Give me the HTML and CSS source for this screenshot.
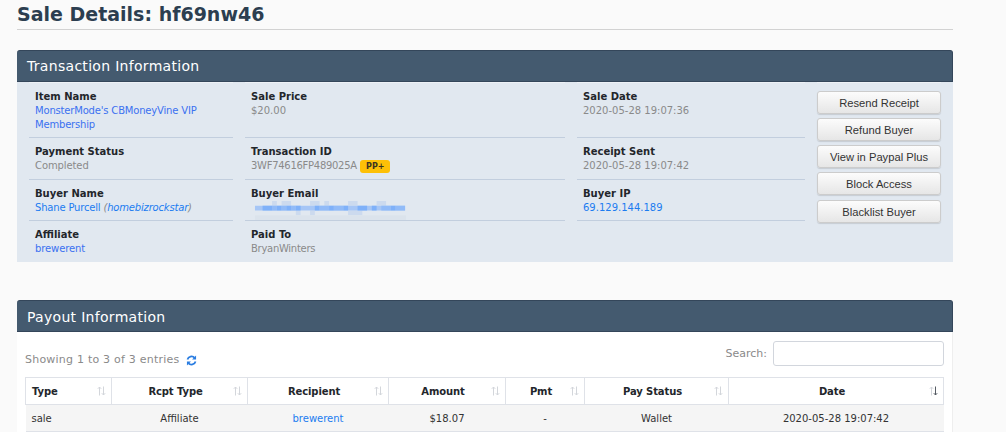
FILE: index.html
```html
<!DOCTYPE html>
<html lang="en">
<head>
<meta charset="utf-8">
<title>Sale Details</title>
<link rel="stylesheet" href="styles.css">
</head>
<body>
<main class="page">
  <h1 class="title">Sale Details: hf69nw46</h1>

  <section class="panel panel-info">
    <h2 class="panel-head">Transaction Information</h2>
    <div class="info-grid">
      <div class="cell"><b>Item Name</b><a class="link-soft tight-2">MonsterMode's CBMoneyVine VIP Membership</a></div>
      <div class="cell"><b>Sale Price</b><span>$20.00</span></div>
      <div class="cell"><b>Sale Date</b><span>2020-05-28 19:07:36</span></div>
      <div class="actions">
        <button>Resend Receipt</button>
        <button>Refund Buyer</button>
        <button>View in Paypal Plus</button>
        <button>Block Access</button>
        <button>Blacklist Buyer</button>
      </div>
      <div class="cell"><b>Payment Status</b><span class="tight-1">Completed</span></div>
      <div class="cell"><b>Transaction ID</b><span><span class="tight-3">3WF74616FP489025A</span> <em class="badge">PP+</em></span></div>
      <div class="cell"><b>Receipt Sent</b><span>2020-05-28 19:07:42</span></div>
      <div class="cell"><b>Buyer Name</b><span class="tight-2"><a>Shane Purcell</a> <i>(<a>homebizrockstar</a>)</i></span></div>
      <div class="cell"><b>Buyer Email</b>
        <svg class="blur" width="159" height="20" viewBox="0 0 159 20" aria-hidden="true">
          <g fill="#ccdaee">
            <rect x="18" y="0" width="5" height="5"/>
            <rect x="28" y="0" width="10" height="5"/>
            <rect x="58" y="0" width="10" height="5"/>
            <rect x="73" y="0" width="5" height="5"/>
            <rect x="98" y="0" width="10" height="5"/>
            <rect x="128" y="0" width="10" height="5"/>
            <rect x="43" y="10" width="5" height="5"/>
            <rect x="58" y="10" width="5" height="5"/>
            <rect x="98" y="10" width="15" height="5"/>
          </g>
          <rect x="0" y="15" width="159" height="5" fill="#dbe3ec"/>
          <rect x="0" y="5" width="158" height="5" fill="#a6c6f6"/>
          <g fill="#7fb1f9">
            <rect x="8" y="5" width="10" height="5"/>
            <rect x="23" y="5" width="5" height="5"/>
            <rect x="33" y="5" width="5" height="5"/>
            <rect x="43" y="5" width="5" height="5"/>
            <rect x="63" y="5" width="5" height="5"/>
            <rect x="78" y="5" width="5" height="5"/>
            <rect x="93" y="5" width="5" height="5"/>
            <rect x="108" y="5" width="10" height="5"/>
            <rect x="123" y="5" width="5" height="5"/>
            <rect x="143" y="5" width="5" height="5"/>
          </g>
          <g fill="#91bbf8">
            <rect x="18" y="5" width="5" height="5"/>
            <rect x="28" y="5" width="5" height="5"/>
            <rect x="38" y="5" width="5" height="5"/>
            <rect x="68" y="5" width="10" height="5"/>
            <rect x="83" y="5" width="10" height="5"/>
            <rect x="133" y="5" width="10" height="5"/>
            <rect x="148" y="5" width="10" height="5"/>
          </g>
        </svg>
      </div>
      <div class="cell"><b>Buyer IP</b><a>69.129.144.189</a></div>
      <div class="cell cell-last"><b>Affiliate</b><a class="link-soft tight-1">brewerent</a></div>
      <div class="cell cell-last"><b>Paid To</b><span class="tight-3">BryanWinters</span></div>
    </div>
  </section>

  <section class="panel panel-payout">
    <h2 class="panel-head">Payout Information</h2>
    <div class="payout-body">
      <div class="toolbar">
        <div class="entries">
          <span>Showing 1 to 3 of 3 entries</span>
          <svg class="refresh" width="11" height="11" viewBox="0 0 12 12" aria-hidden="true">
            <path d="M1.6 5A4.5 4.5 0 0 1 9.4 3.2" fill="none" stroke="#2a7de1" stroke-width="1.9"/>
            <path d="M11 .6V5H6.6z" fill="#2a7de1"/>
            <path d="M10.4 7A4.5 4.5 0 0 1 2.6 8.8" fill="none" stroke="#2a7de1" stroke-width="1.9"/>
            <path d="M1 11.4V7h4.4z" fill="#2a7de1"/>
          </svg>
        </div>
        <label class="search">Search:<input type="text"></label>
      </div>
      <table class="data">
        <colgroup>
          <col class="c1"><col class="c2"><col class="c3"><col class="c4"><col class="c5"><col class="c6"><col class="c7">
        </colgroup>
        <thead>
          <tr>
            <th class="left">Type<svg class="sort" width="9" height="10" viewBox="0 0 9 10"><path d="M2.5 9.5V1M.8 2.8 2.5 1l1.7 1.8M6.5.5V9M4.8 7.2 6.5 9l1.7-1.8" fill="none" stroke="#d3d6db"/></svg></th>
            <th>Rcpt Type<svg class="sort" width="9" height="10" viewBox="0 0 9 10"><path d="M2.5 9.5V1M.8 2.8 2.5 1l1.7 1.8M6.5.5V9M4.8 7.2 6.5 9l1.7-1.8" fill="none" stroke="#d3d6db"/></svg></th>
            <th>Recipient<svg class="sort" width="9" height="10" viewBox="0 0 9 10"><path d="M2.5 9.5V1M.8 2.8 2.5 1l1.7 1.8M6.5.5V9M4.8 7.2 6.5 9l1.7-1.8" fill="none" stroke="#d3d6db"/></svg></th>
            <th>Amount<svg class="sort" width="9" height="10" viewBox="0 0 9 10"><path d="M2.5 9.5V1M.8 2.8 2.5 1l1.7 1.8M6.5.5V9M4.8 7.2 6.5 9l1.7-1.8" fill="none" stroke="#d3d6db"/></svg></th>
            <th>Pmt<svg class="sort" width="9" height="10" viewBox="0 0 9 10"><path d="M2.5 9.5V1M.8 2.8 2.5 1l1.7 1.8M6.5.5V9M4.8 7.2 6.5 9l1.7-1.8" fill="none" stroke="#d3d6db"/></svg></th>
            <th>Pay Status<svg class="sort" width="9" height="10" viewBox="0 0 9 10"><path d="M2.5 9.5V1M.8 2.8 2.5 1l1.7 1.8M6.5.5V9M4.8 7.2 6.5 9l1.7-1.8" fill="none" stroke="#d3d6db"/></svg></th>
            <th>Date<svg class="sort" width="9" height="10" viewBox="0 0 9 10"><path d="M2.5 9.5V1M.8 2.8 2.5 1l1.7 1.8" fill="none" stroke="#d3d6db"/><path d="M6.5.5V9M4.8 7.2 6.5 9l1.7-1.8" fill="none" stroke="#555b63"/></svg></th>
          </tr>
        </thead>
        <tbody>
          <tr>
            <td class="left">sale</td>
            <td>Affiliate</td>
            <td><a>brewerent</a></td>
            <td>$18.07</td>
            <td>-</td>
            <td>Wallet</td>
            <td>2020-05-28 19:07:42</td>
          </tr>
        </tbody>
      </table>
    </div>
  </section>
</main>
</body>
</html>
```

FILE: styles.css
```css
* { box-sizing: border-box; }
html, body { margin: 0; height: 432px; overflow: hidden; }
body {
  background: #fafafa;
  font-family: "DejaVu Sans", Verdana, sans-serif;
  font-size: 10px;
  line-height: 14px;
  color: #333;
}
.page { width: 936px; margin-left: 17px; }
.title {
  margin: 0;
  height: 30px;
  font-size: 19px;
  line-height: 28px;
  font-weight: 700;
  color: #2c3e50;
  border-bottom: 1px solid #d2d2d2;
}
.panel { margin-top: 20px; }
.panel-payout { margin-top: 38px; }
.panel-head {
  margin: 0;
  height: 32px;
  padding-left: 10px;
  font-size: 14px;
  line-height: 31px;
  font-weight: 400;
  letter-spacing: .3px;
  color: #fff;
  background: #445a6f;
  border: 1px solid #34465a;
  border-width: 1px 1px 1px 0;
  border-radius: 3px 3px 0 0;
}
.panel-payout .panel-head { line-height: 32px; }
.info-grid {
  display: grid;
  grid-template-columns: 204px 320px 228px 124px;
  grid-template-rows: 56px 42px 41px 41px;
  column-gap: 12px;
  padding: 0 12px;
  background: #e1e8f0;
  height: 180px;
}
.cell {
  padding: 7px 6px 0;
  display: flex;
  flex-direction: column;
  align-items: flex-start;
  border-bottom: 1px solid #c2cede;
}
.cell:nth-child(-n+3) { border-top: 1px solid #edf1f6; }
.cell-last { border-bottom: 0; }
.cell b { font-weight: 700; color: #23262b; }
.cell span { color: #8a8a8a; }
.cell i { color: #8a8a8a; }
a { color: #1c7cf0; }
.link-soft { color: #3b71f0; }
.tight-1 { letter-spacing: -.1px; }
.tight-2 { letter-spacing: -.18px; }
.tight-3 { letter-spacing: -.28px; }
.badge {
  display: inline-block;
  height: 13px;
  padding: 0 6px;
  margin-left: 0;
  font-size: 8px;
  line-height: 13px;
  font-weight: 700;
  font-style: normal;
  color: #3a3320;
  background: #fdc007;
  border-radius: 3px;
}
.blur { display: block; }
.actions {
  grid-column: 4;
  grid-row: 1 / 5;
  display: flex;
  flex-direction: column;
  gap: 4px;
  padding-top: 8px;
  border-top: 1px solid #edf1f6;
}
.actions button:last-child { margin-top: 1px; }
button {
  height: 23px;
  padding: 0;
  font-family: "Liberation Sans", Arial, sans-serif;
  font-size: 11.2px;
  color: #333;
  background: linear-gradient(#fcfcfc, #e6e6e6);
  border: 1px solid #ccc;
  border-radius: 3px;
  box-shadow: 0 1px 1px rgba(0,0,0,.12);
}
.payout-body {
  height: 100px;
  background: #fff;
  padding: 0 8px;
  border-right: 1px solid #eee;
}
.toolbar {
  display: flex;
  justify-content: space-between;
  height: 45px;
  padding-top: 9px;
}
.entries {
  display: flex;
  align-items: center;
  gap: 7px;
  height: 38px;
  font-size: 11px;
  letter-spacing: .22px;
  color: #8a8a8a;
}
.search {
  display: flex;
  align-items: center;
  gap: 6px;
  height: 25px;
  font-size: 11px;
  color: #8a8a8a;
}
.search input {
  width: 171px;
  height: 25px;
  background: #fff;
  border: 1px solid #d2d6dd;
  border-radius: 3px;
}
.data {
  width: 918px;
  table-layout: fixed;
  border-collapse: collapse;
  font-size: 10px;
}
.c1 { width: 86px; }
.c2 { width: 136px; }
.c3 { width: 141px; }
.c4 { width: 117px; }
.c5 { width: 79px; }
.c6 { width: 144px; }
.c7 { width: 215px; }
.data th {
  position: relative;
  height: 27px;
  padding: 2px 14px 0 6px;
  font-weight: 700;
  letter-spacing: -.1px;
  color: #23262b;
  text-align: center;
  border: 1px solid #dfe2e8;
}
.data th.left, .data td.left { text-align: left; }
.sort { position: absolute; right: 5px; top: 8px; }
.data td {
  height: 27px;
  padding: 2px 6px 0;
  text-align: center;
  color: #333;
  background: #f5f5f5;
  border-bottom: 1px solid #dfe2e8;
}
```
